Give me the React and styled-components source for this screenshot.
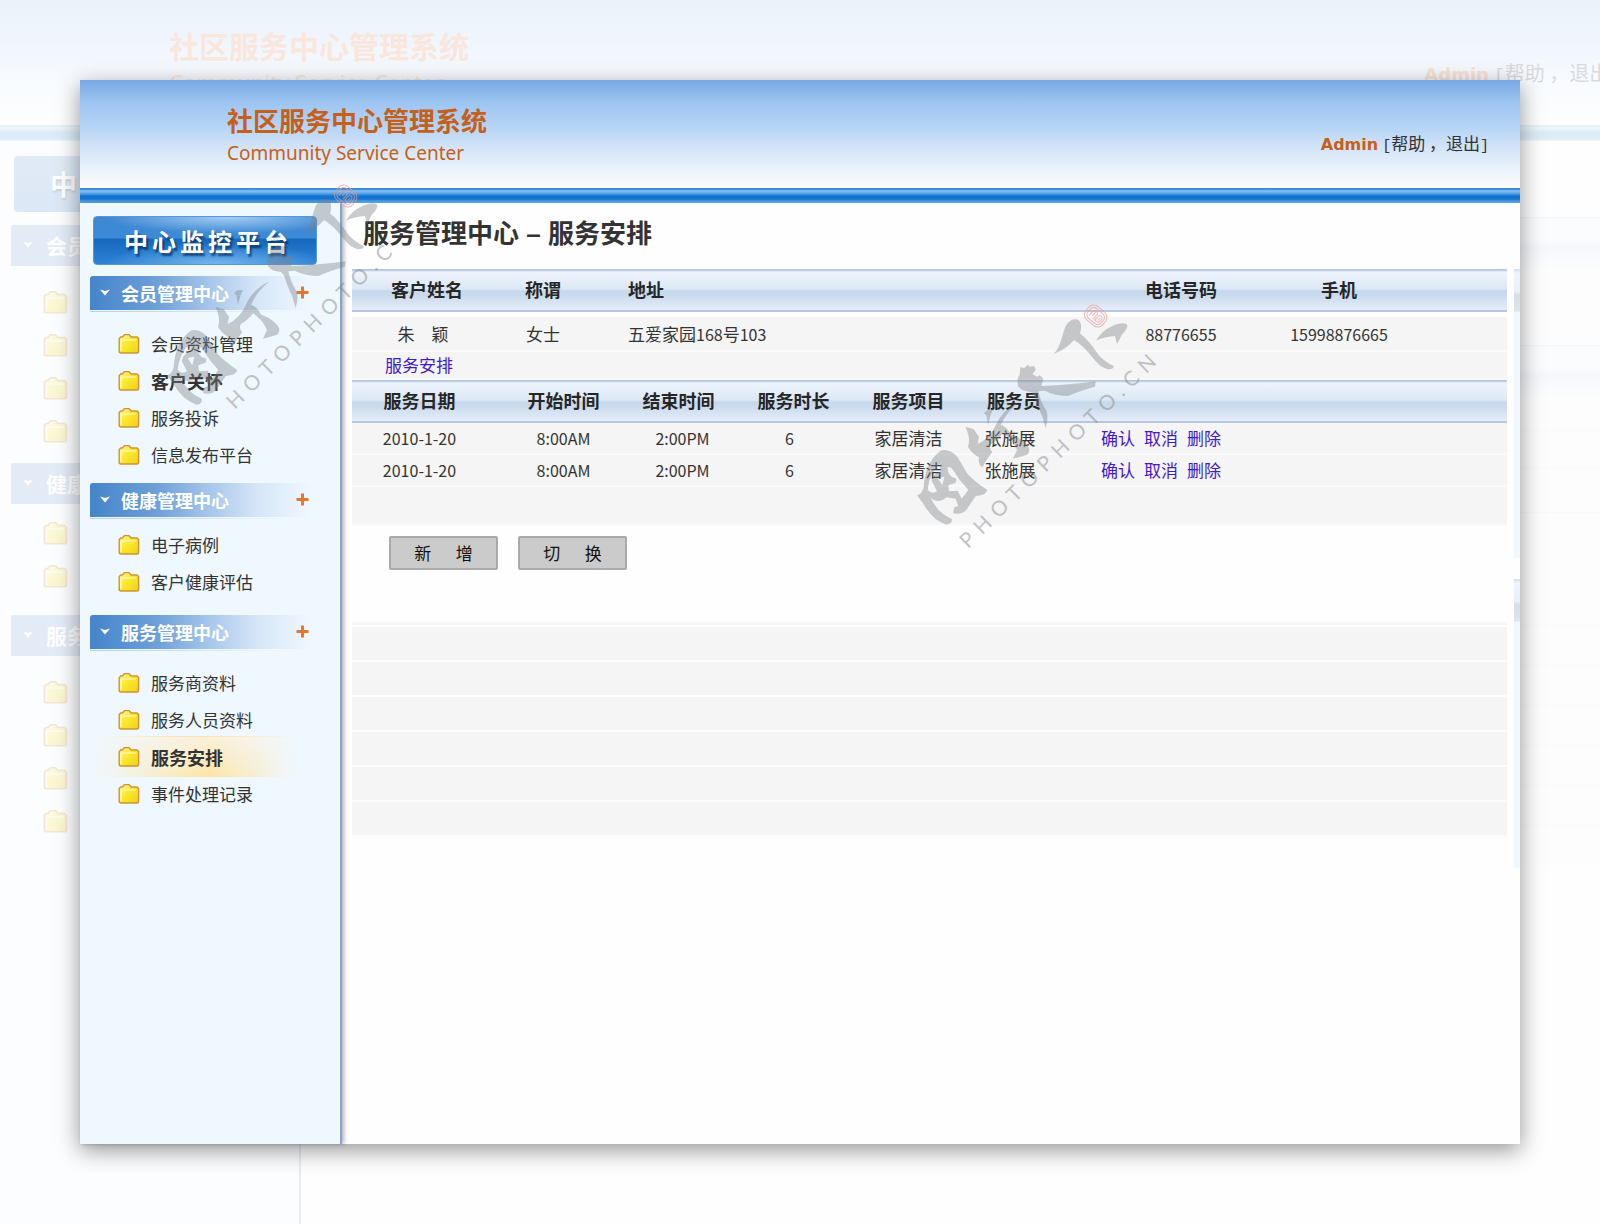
import React from "react";
import styled, { createGlobalStyle, css } from "styled-components";

const cjk = '"Noto Sans CJK SC", sans-serif';
const latin = '"Noto Sans", "Noto Sans CJK SC", sans-serif';
const wide = '"DejaVu Sans", sans-serif';

const GlobalStyle = createGlobalStyle`
  *, *::before, *::after { box-sizing: border-box; }
  body { margin: 0; background: #fefefe; font-family: ${cjk}; color: #333; }
  button { font-family: inherit; border: 0; padding: 0; background: none; cursor: pointer; }
  a { text-decoration: none; }
`;

/* ---------- page ---------- */

const Page = styled.div`
  position: relative;
  min-height: 100vh;
  padding: 80px;
  overflow: hidden;
`;

const Window = styled.div`
  position: relative;
  display: flex;
  flex-direction: column;
  min-height: calc(100vh - 160px);
  background: #fefefe;
  box-shadow: 0 6px 22px rgba(0, 0, 0, 0.42);
`;

/* ---------- header ---------- */

const Header = styled.header`
  display: flex;
  justify-content: space-between;
  height: 108px;
  padding: 23px 31px 0 147px;
  background: linear-gradient(#78a8e2 0%, #9cc4f2 20%, #b4d3f6 42%, #d2e3f8 62%, #ecf3fc 84%, #fbfcfe 100%);
`;

const Bar = styled.div`
  height: 15px;
  background: linear-gradient(#2f86d6 0 1px, #8cc2f2 3px, #4a9be4 6px, #0f74d0 8px, #1474cf 11px, #4a9ae3 13px, #58a5e8 15px);
`;

const Brand = styled.div`
  color: #c4601a;
`;

const BrandName = styled.h1`
  margin: 0;
  font-size: 26px;
  line-height: 34px;
  font-weight: 700;
`;

const BrandSub = styled.p`
  margin: 0;
  font-family: ${latin};
  font-size: 19px;
  line-height: 32px;
`;

const Account = styled.nav`
  padding-top: 27px;
  font-size: 17px;
  line-height: 26px;
  white-space: nowrap;
  a { color: #333; }
`;

const Bracket = styled.span`
  font-family: "Liberation Mono", monospace;
  font-size: ${(p) => (p.$large ? 18 : 15)}px;
`;

const UserName = styled.strong`
  margin-right: 4px;
  font-family: ${wide};
  font-size: 16px;
  color: #c4601a;
`;

/* ---------- sidebar ---------- */

const Body = styled.div`
  display: flex;
  flex: 1;
`;

const Sidebar = styled.aside`
  flex: none;
  width: 262px;
  padding: 13px 0 24px;
  background: #f0f8ff;
  border-right: 2px solid #86a3cc;
  box-shadow: 2px 0 4px rgba(60, 70, 90, 0.4);
`;

const PlatformButton = styled.button`
  display: block;
  width: 224px;
  height: 49px;
  margin: 0 0 11px 13px;
  padding: 0 28px 0 30px;
  border: 1px solid #5b97d6;
  border-radius: 4px;
  background:
    radial-gradient(ellipse 50% 45% at 55% 100%, rgba(130, 195, 245, 0.8), transparent),
    radial-gradient(ellipse 55% 35% at 60% 0%, rgba(190, 225, 252, 0.8), transparent),
    linear-gradient(#3f87d0 0%, #3c8ad8 44%, #1469bd 48%, #2f83d6 100%);
  color: #fff;
  font-size: 24px;
  font-weight: 700;
  line-height: 46px;
  text-align: justify;
  text-align-last: justify;
  text-shadow: 2px 3px 2px rgba(0, 30, 80, 0.65);
`;

const GroupHead = styled.div`
  display: flex;
  align-items: center;
  justify-content: space-between;
  width: 226px;
  height: 37px;
  margin-left: 10px;
  padding: 0 7px 4px 10px;
  border-radius: 3px 0 0 0;
  background:
    linear-gradient(#f0f8ff, #f0f8ff) 0 34px / 100% 1px no-repeat,
    linear-gradient(rgba(240, 248, 255, 0.65), rgba(240, 248, 255, 0.65)) 0 35px / 100% 1px no-repeat,
    linear-gradient(#f0f8ff, #f0f8ff) 0 36px / 100% 1px no-repeat,
    linear-gradient(90deg, #4484cb 0%, #6fa0d8 30%, #a5c5ea 52%, #d6e6f7 74%, #f0f8ff 98%);
`;

const GroupToggle = styled.button`
  display: flex;
  align-items: center;
  gap: 11px;
  color: #fff;
  font-size: 18px;
  font-weight: 700;
  line-height: 26px;
`;

const AddButton = styled.button`
  display: flex;
  color: #e8752e;
`;

const ItemList = styled.ul`
  margin: 0;
  padding: ${(p) => (p.$tight ? "6px 0 15px" : "12px 0 10px")};
  list-style: none;
`;

const Item = styled.li`
  height: 37px;
  ${(p) =>
    p.$active &&
    css`
      height: 41px;
      margin: -2px 0;
      background:
        linear-gradient(90deg, transparent 10%, #fbe3ab 40%, transparent 84%) 0 0 / 100% 1px no-repeat,
        linear-gradient(90deg, #f0f8ff 4%, rgba(240, 248, 255, 0) 50%, #f0f8ff 84%),
        linear-gradient(#fbf0da, #fde5a6);
    `}
`;

const ItemLink = styled.a`
  display: flex;
  align-items: center;
  gap: 11px;
  height: 100%;
  padding-left: 38px;
  color: #333;
  font-size: ${(p) => (p.$strong ? 18 : 17)}px;
  font-weight: ${(p) => (p.$strong ? 700 : 400)};
`;

/* ---------- main ---------- */

const Main = styled.main`
  display: flex;
  flex: 1;
  gap: 7px;
  padding-left: 10px;
  min-width: 0;
`;

const Content = styled.div`
  flex: 1;
  min-width: 0;
`;

const Heading = styled.h2`
  margin: 0;
  padding-left: 11px;
  height: 66px;
  font-family: "Liberation Sans", ${cjk};
  font-size: 26px;
  line-height: 62px;
  font-weight: 700;
  color: #333;
`;

const Table = styled.table`
  width: 100%;
  table-layout: fixed;
  border-collapse: separate;
  border-spacing: 0;
  font-size: 17px;
  line-height: 24px;
`;

const Col = styled.col`
  width: ${(p) => (p.$w ? `${p.$w}px` : "auto")};
`;

const HeadRow = styled.tr`
  height: 43px;
  background: linear-gradient(#b4c6dc 0 1px, #eef4fb 3px, #dce8f5 20px, #c6d8ec 22px, #cddcee 28px, #e6eefa 41px, #b6c8de 41px 43px);
`;

const Row = styled.tr`
  height: ${(p) => p.$h}px;
  background: #f5f5f5;
`;

const cell = css`
  padding: 0 ${(p) => p.$right || 0}px 0 ${(p) => p.$left || 0}px;
  text-align: ${(p) => (p.$start ? "left" : "center")};
  white-space: nowrap;
`;

const Th = styled.th`
  ${cell}
  padding-bottom: 4px;
  font-size: 18px;
  color: #262626;
`;

const Td = styled.td`
  ${cell}
  border-top: ${(p) => (p.$gap ? "5px solid #fefefe" : "0")};
  border-bottom: 2px solid #fafafa;
`;

const Num = styled.span`
  font-size: 16px;
`;

const TextLink = styled.a`
  color: #4318d2;
`;

const Actions = styled.span`
  display: flex;
  gap: 9px;
`;

const Buttons = styled.div`
  display: flex;
  gap: 20px;
  padding: 10px 0 0 37px;
`;

const PushButton = styled.button`
  width: 109px;
  height: 34px;
  border: 2px solid #a9a9a9;
  border-radius: 2px;
  background: #cbcbcb;
  color: #111;
  font-size: 17px;
  line-height: 26px;
  white-space: pre;
`;

const BlankRows = styled.div`
  margin-top: 52px;
  border-top: 3px solid #f7f7f7;
  border-bottom: 1px solid #f9f9f9;
  padding-top: 2px;
`;

const BlankRow = styled.div`
  height: 35px;
  background: #f5f5f5;
  border-bottom: 2px solid #fcfcfc;
`;

const Rail = styled.div`
  flex: none;
  display: flex;
  flex-direction: column;
  gap: 21px;
  width: 6px;
  padding-top: 66px;
`;

const RailBlock = styled.div`
  height: 289px;
  background: linear-gradient(#d9e1ea 0 1px, #eef6fc 4px, #e9f1f8 22px, #d5dfea 26px, #dde5ee 42px, #f0f7fd 43px);
`;

/* ---------- faded backdrop ---------- */

const Backdrop = styled.div`
  position: absolute;
  inset: 0 auto 0 0;
  display: flex;
  flex-direction: column;
  width: 104%;
  color: #d9dadd;
`;

const BackHeader = styled.div`
  display: flex;
  justify-content: space-between;
  height: 125px;
  padding: 26px 44px 0 169px;
  background: linear-gradient(#e9f1fa 0%, #f1f6fd 35%, #fafcff 75%, #fefefe 100%);
`;

const BackBar = styled.div`
  height: 16px;
  background: linear-gradient(#e6eef6, #ecf5fc 3px, #dcebf6 8px, #dcecf7 13px, #edf5fb);
`;

const BackBrand = styled.div`
  color: #f9e7dc;
  font-size: 30px;
  font-weight: 700;
  line-height: 38px;
`;

const BackSub = styled.div`
  font-family: ${latin};
  font-size: 22px;
  font-weight: 400;
  line-height: 36px;
`;

const BackAccount = styled.div`
  padding-top: 32px;
  font-size: 20px;
  line-height: 30px;
  white-space: nowrap;
`;

const BackUser = styled.strong`
  margin-right: 5px;
  color: #f9e3d5;
  font-family: ${wide};
  font-size: 18px;
`;

const BackBody = styled.div`
  display: flex;
  flex: 1;
`;

const BackSidebar = styled.div`
  flex: none;
  width: 301px;
  padding-top: 15px;
  background: #fcfdff;
  border-right: 2px solid #e9ebf2;
`;

const BackPlatform = styled.div`
  width: 258px;
  height: 56px;
  margin: 0 0 13px 14px;
  padding-left: 36px;
  border-radius: 4px;
  background: linear-gradient(#e1ebf6, #dbe8f5);
  color: #fff;
  font-size: 27px;
  font-weight: 700;
  line-height: 56px;
  text-shadow: 1px 2px 2px #c8d4e2;
`;

const BackGroup = styled.div`
  display: flex;
  align-items: center;
  gap: 13px;
  height: 41px;
  margin-left: 11px;
  padding: 0 0 2px 12px;
  border-radius: 3px 0 0 0;
  background: #e3ebf6;
  color: #fff;
  font-size: 21px;
  font-weight: 700;
`;

const BackItems = styled.div`
  padding: ${(p) => (p.$tight ? "8px 0 17px 43px" : "15px 0 10px 43px")};
`;

const BackItem = styled.div`
  display: flex;
  align-items: center;
  height: 43px;
  opacity: 0.2;
`;

const BackMain = styled.div`
  flex: 1;
  padding-top: 76px;
`;

const BackBand = styled.div`
  height: ${(p) => p.$h}px;
  border-top: 1px solid ${(p) => (p.$head ? "#f3f5f9" : "#fafafb")};
  background: ${(p) => (p.$head ? "linear-gradient(#fbfcfe 45%, #f5f7fb 60%, #fbfcfe)" : "#fdfdfd")};
`;

/* ---------- drawings ---------- */

const Mark = styled.svg`
  position: absolute;
  left: ${(p) => p.$x}px;
  top: ${(p) => p.$y}px;
  width: 260px;
  height: 260px;
  pointer-events: none;
  overflow: visible;
`;

const MarkText = styled.text`
  font-family: Lato, sans-serif;
  font-size: 62px;
  font-weight: 400;
  letter-spacing: 22px;
  fill: #7d8085;
  opacity: 0.45;
`;

function Watermark({ x, y, text, start }) {
  return (
    <Mark $x={x} $y={y} viewBox="340 120 780 780" aria-hidden="true">
      <g fill="#7d8187" opacity="0.4">
        <path d="M763 281C786 258 788 215 800 195Q815 173 835 179Q850 190 841 220Q872 246 896 284Q916 306 942 318Q943 329 925 328Q903 323 885 300Q850 255 823 240Q800 268 763 281Z" />
        <path d="M889 242Q905 212 940 197Q975 184 983 195Q984 207 968 222L952 252L946 228Q915 230 889 242Z" />
        <path d="M655 378Q650 354 660 345L662 322L674 324L684 314L690 320L704 318L708 330L698 342L712 350L720 346L731 356L725 378Q760 376 790 374Q840 372 888 364L886 380Q840 392 806 408Q768 408 735 392L716 394Q722 425 740 452Q748 470 738 504L728 470Q710 432 704 408L694 396Q664 394 655 378Z" />
        <path d="M553 460L562 451L580 450L573 464L565 495L560 466Z" />
        <path d="M660 424Q620 456 604 494Q622 500 634 524Q660 530 682 554Q696 572 682 584Q664 590 640 596L652 570Q640 540 610 520Q596 540 574 552Q566 564 578 576L562 598L548 622Q534 612 538 592Q516 580 505 560Q514 536 497 500L522 508L538 530L534 552Q572 534 588 496Q606 450 660 424Z" />
        <path fillRule="evenodd" d="M352 706Q368 702 372 682Q376 606 425 571Q452 566 474 592L502 640Q528 668 563 690Q560 706 528 708L500 750Q480 768 460 758L464 742L476 738L468 716L440 712Q424 728 402 720L392 712Q414 760 456 776Q460 792 440 794Q398 780 370 730ZM384 690Q396 704 412 694L396 662Q402 640 424 634L420 612Q388 640 384 690ZM414 654L428 676L434 650ZM444 620Q442 650 470 656L468 668L446 676L448 694L474 692L486 716L506 690Q478 660 456 624Z" />
      </g>
      <g fill="none" stroke="#ee9a9a" strokeWidth="3" opacity="0.7" transform="rotate(40 888 168)">
        <rect x="855" y="142" width="66" height="52" rx="20" />
        <rect x="862" y="149" width="52" height="38" rx="14" />
        <path d="M872 180V160q8-10 16 0v20M880 158v16M894 180v-18q10-10 14 2v10q-6 8-14 4M902 164v10" />
      </g>
      <MarkText transform={`translate(${start}) rotate(-44.5)`}>{text}</MarkText>
    </Mark>
  );
}

function Folder({ size = 22 }) {
  return (
    <svg width={size} height={size} viewBox="0 0 22 22" aria-hidden="true">
      <defs>
        <linearGradient id="folder" x1="0" y1="0" x2="1" y2="1">
          <stop offset="0" stopColor="#fff79a" />
          <stop offset="0.45" stopColor="#fbe82c" />
          <stop offset="1" stopColor="#edd21a" />
        </linearGradient>
      </defs>
      <path d="M1.2 5.6L2.6 4L4.6 3.8L6.4 1.6H11L13.2 4H19L20.6 5.6V18.2Q20.6 20 19 20H2.8Q1.2 20 1.2 18.4Z" fill="url(#folder)" stroke="#cf9238" strokeWidth="1.4" />
      <path d="M3 18V8.4Q3 7 4.4 7H18" fill="none" stroke="#fffbd0" strokeWidth="1.2" />
    </svg>
  );
}

function Chevron() {
  return (
    <svg width="10" height="7" viewBox="0 0 10 7" aria-hidden="true">
      <path d="M0 0.5L5 2L10 0.5L5 6.5Z" fill="#fff" />
    </svg>
  );
}

function Plus() {
  return (
    <svg width="13" height="13" viewBox="0 0 13 13" aria-hidden="true">
      <path d="M6.5 0.5V12.5M0.5 6.5H12.5" stroke="currentColor" strokeWidth="3" />
    </svg>
  );
}

/* ---------- data ---------- */

const groups = [
  {
    title: "会员管理中心",
    items: [
      { text: "会员资料管理" },
      { text: "客户关怀", strong: true },
      { text: "服务投诉" },
      { text: "信息发布平台" },
    ],
  },
  { title: "健康管理中心", tight: true, items: [{ text: "电子病例" }, { text: "客户健康评估" }] },
  {
    title: "服务管理中心",
    items: [
      { text: "服务商资料" },
      { text: "服务人员资料" },
      { text: "服务安排", strong: true, active: true },
      { text: "事件处理记录" },
    ],
  },
];

const bookings = [
  { date: "2010-1-20", from: "8:00AM", to: "2:00PM", hours: "6", job: "家居清洁", staff: "张施展" },
  { date: "2010-1-20", from: "8:00AM", to: "2:00PM", hours: "6", job: "家居清洁", staff: "张施展" },
];

const backBands = [
  [49, true], [79], [49, true], [36], [37], [45], [113], [40], [40], [40], [40], [40], [40],
];

/* ---------- app ---------- */

function FadedBackdrop() {
  return (
    <Backdrop aria-hidden="true">
      <BackHeader>
        <BackBrand>
          社区服务中心管理系统
          <BackSub>Community Service Center</BackSub>
        </BackBrand>
        <BackAccount>
          <BackUser>Admin</BackUser>
          <Bracket $large>[</Bracket>帮助 ，退出<Bracket $large>]</Bracket>
        </BackAccount>
      </BackHeader>
      <BackBar />
      <BackBody>
        <BackSidebar>
          <BackPlatform>中</BackPlatform>
          {groups.map((g) => (
            <React.Fragment key={g.title}>
              <BackGroup>
                <Chevron />
                {g.title.slice(0, 2)}
              </BackGroup>
              <BackItems $tight={g.tight}>
                {g.items.map((it) => (
                  <BackItem key={it.text}>
                    <Folder size={25} />
                  </BackItem>
                ))}
              </BackItems>
            </React.Fragment>
          ))}
        </BackSidebar>
        <BackMain>
          {backBands.map(([h, head], i) => (
            <BackBand key={i} $h={h} $head={head} />
          ))}
        </BackMain>
      </BackBody>
    </Backdrop>
  );
}

function SideNav() {
  return (
    <Sidebar>
      <PlatformButton type="button">中心监控平台</PlatformButton>
      {groups.map((g) => (
        <section key={g.title}>
          <GroupHead>
            <GroupToggle type="button">
              <Chevron />
              {g.title}
            </GroupToggle>
            <AddButton type="button" aria-label="+">
              <Plus />
            </AddButton>
          </GroupHead>
          <ItemList $tight={g.tight}>
            {g.items.map((it) => (
              <Item key={it.text} $active={it.active}>
                <ItemLink href="#" $strong={it.strong}>
                  <Folder />
                  {it.text}
                </ItemLink>
              </Item>
            ))}
          </ItemList>
        </section>
      ))}
    </Sidebar>
  );
}

function CustomerTable() {
  return (
    <Table>
      <colgroup>
        <Col $w={150} />
        <Col $w={82} />
        <Col />
        <Col $w={148} />
        <Col $w={168} />
        <Col $w={84} />
      </colgroup>
      <thead>
        <HeadRow>
          <Th>客户姓名</Th>
          <Th>称谓</Th>
          <Th $start $left={44}>地址</Th>
          <Th>电话号码</Th>
          <Th>手机</Th>
          <Th />
        </HeadRow>
      </thead>
      <tbody>
        <Row $h={40}>
          <Td $gap $right={8}>朱　颖</Td>
          <Td $gap>女士</Td>
          <Td $gap $start $left={44}>
            五爱家园<Num>168</Num>号<Num>103</Num>
          </Td>
          <Td $gap><Num>88776655</Num></Td>
          <Td $gap><Num>15998876665</Num></Td>
          <Td $gap />
        </Row>
        <Row $h={28}>
          <Td colSpan={6} $start $left={33}>
            <TextLink href="#">服务安排</TextLink>
          </Td>
        </Row>
      </tbody>
    </Table>
  );
}

function BookingTable() {
  return (
    <Table>
      <colgroup>
        <Col $w={154} />
        <Col $w={115} />
        <Col $w={115} />
        <Col $w={115} />
        <Col $w={115} />
        <Col $w={96} />
        <Col />
      </colgroup>
      <thead>
        <HeadRow>
          <Th $right={19}>服务日期</Th>
          <Th>开始时间</Th>
          <Th>结束时间</Th>
          <Th>服务时长</Th>
          <Th>服务项目</Th>
          <Th>服务员</Th>
          <Th />
        </HeadRow>
      </thead>
      <tbody>
        {bookings.map((b, i) => (
          <Row key={i} $h={32}>
            <Td $right={19}><Num>{b.date}</Num></Td>
            <Td><Num>{b.from}</Num></Td>
            <Td $left={8}><Num>{b.to}</Num></Td>
            <Td $right={8}><Num>{b.hours}</Num></Td>
            <Td>{b.job}</Td>
            <Td $right={8}>{b.staff}</Td>
            <Td $start $left={39}>
              <Actions>
                <TextLink href="#">确认</TextLink>
                <TextLink href="#">取消</TextLink>
                <TextLink href="#">删除</TextLink>
              </Actions>
            </Td>
          </Row>
        ))}
        <Row $h={39}>
          <Td colSpan={7} />
        </Row>
      </tbody>
    </Table>
  );
}

export default function App() {
  return (
    <Page>
      <GlobalStyle />
      <FadedBackdrop />
      <Window>
        <Header>
          <Brand>
            <BrandName>社区服务中心管理系统</BrandName>
            <BrandSub>Community Service Center</BrandSub>
          </Brand>
          <Account>
            <UserName>Admin</UserName>
            <Bracket>[</Bracket>
            <a href="#">帮助</a> ，<a href="#">退出</a>
            <Bracket>]</Bracket>
          </Account>
        </Header>
        <Bar />
        <Body>
          <SideNav />
          <Main>
            <Content>
              <Heading>服务管理中心 – 服务安排</Heading>
              <CustomerTable />
              <BookingTable />
              <Buttons>
                <PushButton type="button">新　  增</PushButton>
                <PushButton type="button">切　  换</PushButton>
              </Buttons>
              <BlankRows>
                {[1, 2, 3, 4, 5, 6].map((n) => (
                  <BlankRow key={n} />
                ))}
              </BlankRows>
            </Content>
            <Rail>
              <RailBlock />
              <RailBlock />
            </Rail>
          </Main>
        </Body>
        <Watermark x={83} y={100} text="HOTOPHOTO.C" start="555 810" />
        <Watermark x={833} y={220} text="PHOTOPHOTO.CN" start="505 868" />
      </Window>
    </Page>
  );
}
